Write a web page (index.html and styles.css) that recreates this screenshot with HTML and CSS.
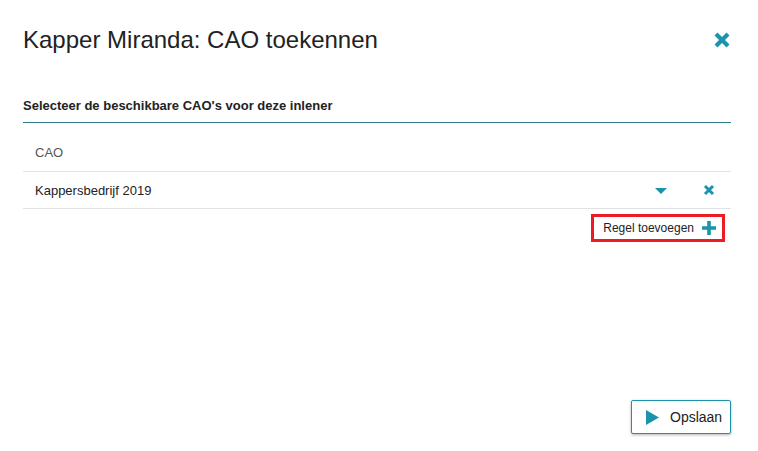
FILE: index.html
```html
<html>
<head>
	<link rel="stylesheet" href="styles.css">
</head>
<body>
	<div class="modal">
		<div class="modal-head">
			<h1>Kapper Miranda: CAO toekennen</h1>
			<a class="close" href="#">
				<svg width="18" height="18" viewBox="0 0 18 18"><path d="M3 3 L15 15 M15 3 L3 15" stroke="#1a94ad" stroke-width="4.2" stroke-linecap="butt"/></svg>
			</a>
		</div>

		<h3 class="section">Selecteer de beschikbare CAO's voor deze inlener</h3>

		<div class="grid">
			<div class="grid-head">CAO</div>
			<div class="grid-row">
				<span class="name">Kappersbedrijf 2019</span>
				<span class="caret">
					<svg width="12" height="7" viewBox="0 0 12 7"><path d="M0 0 H12 L6 6 Z" fill="#1a94ad"/></svg>
				</span>
				<span class="remove">
					<svg width="12" height="12" viewBox="0 0 12 12"><path d="M2 2 L10 10 M10 2 L2 10" stroke="#1a94ad" stroke-width="3"/></svg>
				</span>
			</div>
		</div>

		<div class="add-line">
			<a class="add" href="#">Regel toevoegen
				<svg width="14" height="14" viewBox="0 0 14 14"><path d="M7 0 V14 M0 7 H14" stroke="#1a94ad" stroke-width="3.6"/></svg>
			</a>
		</div>

		<div class="modal-foot">
			<button class="save">
				<svg width="13" height="15" viewBox="0 0 13 15"><path d="M0 0 L13 7.5 L0 15 Z" fill="#1a94ad"/></svg>
				Opslaan
			</button>
		</div>
	</div>
</body>
</html>
```

FILE: styles.css
```css
body {
	margin: 0;
	font-family: "Liberation Sans", Arial, sans-serif;
	color: #1a1a1a;
	background: #fff;
}

.modal {
	height: 451px;
	box-sizing: border-box;
	padding: 0 27px 17px 23px;
	display: flex;
	flex-direction: column;
}

.modal-head {
	display: flex;
	justify-content: space-between;
	align-items: center;
	height: 80px;
}
.modal-head h1 {
	margin: 0;
	font-size: 24px;
	font-weight: normal;
	color: #222;
}
.close {
	display: flex;
	margin-right: 0;
}

.section {
	margin: 18px 0 0 0;
	padding-bottom: 9px;
	font-size: 13px;
	font-weight: bold;
	color: #222;
	border-bottom: 1px solid #2c7a8c;
}

.grid-head {
	height: 48px;
	line-height: 60px;
	padding-left: 12px;
	font-size: 13px;
	color: #555;
	border-bottom: 1px solid #e2e2e2;
}
.grid-row {
	display: flex;
	align-items: center;
	height: 36px;
	padding-left: 12px;
	font-size: 13px;
	color: #222;
	border-bottom: 1px solid #e2e2e2;
}
.grid-row .name {
	flex: 1;
}
.caret {
	display: flex;
	margin-right: 36px;
	margin-top: 2px;
}
.remove {
	display: flex;
	margin-right: 16px;
}

.add-line {
	display: flex;
	justify-content: flex-end;
	margin-top: 5px;
	margin-right: 6px;
}
.add {
	display: flex;
	align-items: center;
	gap: 8px;
	height: 22px;
	padding: 0 6px 0 9px;
	border: 3px solid #ed1c24;
	font-size: 12px;
	color: #222;
	text-decoration: none;
}

.modal-foot {
	margin-top: auto;
	display: flex;
	justify-content: flex-end;
}
.save {
	display: flex;
	align-items: center;
	gap: 11px;
	width: 100px;
	height: 34px;
	padding: 0 0 0 14px;
	background: #fff;
	border: 1px solid #1a94ad;
	border-radius: 2px;
	box-shadow: 0 1px 3px rgba(0, 0, 0, 0.3);
	font-family: "Liberation Sans", Arial, sans-serif;
	font-size: 14px;
	color: #222;
}
```
